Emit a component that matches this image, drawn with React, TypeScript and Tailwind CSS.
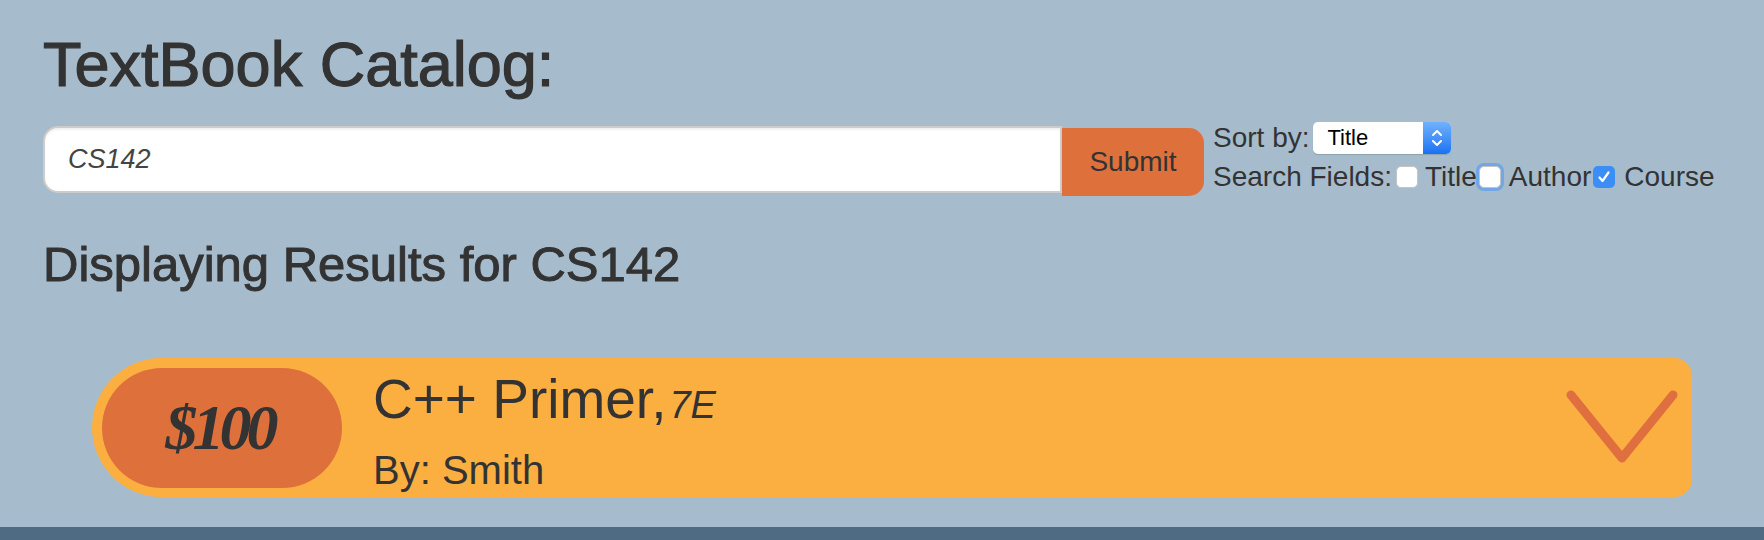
import React from 'react';

const Checkbox = ({ checked = false, focused = false }: { checked?: boolean; focused?: boolean }) => (
  <span
    className={`inline-flex items-center justify-center w-[22px] h-[22px] rounded-[5px] shrink-0 ${
      checked ? 'bg-[#3a8ef6]' : 'bg-white border border-[#c4c4c4]'
    } ${focused ? 'ring-[3px] ring-[#73a6e6]' : ''}`}
  >
    {checked && (
      <svg width="14" height="14" viewBox="0 0 14 14">
        <path d="M2.5 7.5 L5.5 11 L11.5 2.5" fill="none" stroke="white" strokeWidth="2.2" strokeLinecap="round" strokeLinejoin="round" />
      </svg>
    )}
  </span>
);

const SortSelect = () => (
  <div className="ml-[4px] flex w-[138px] h-[32px] rounded-[5px] overflow-hidden bg-white shadow-[0_1px_1px_rgba(0,0,0,0.15)]">
    <span className="flex-1 pl-[14px] text-[22px] leading-[32px] text-black">Title</span>
    <span className="w-[28px] h-full flex items-center justify-center bg-gradient-to-b from-[#6fb1fd] to-[#1772f3]">
      <svg width="14" height="22" viewBox="0 0 14 22">
        <path d="M3 8 L7 4 L11 8 M3 14 L7 18 L11 14" fill="none" stroke="white" strokeWidth="2" strokeLinecap="round" strokeLinejoin="round" />
      </svg>
    </span>
  </div>
);

export default function App() {
  return (
    <div className="min-h-[540px] w-full bg-[#a6bccc] text-[#333333] font-['Liberation_Sans',Arial,sans-serif] flex flex-col">
      <div className="pl-[43px] pt-[33px]">
        <h1 className="text-[63px] leading-[62px] [-webkit-text-stroke:1.2px_#333333]">TextBook Catalog:</h1>

        {/* search form */}
        <div className="mt-[27px] flex items-start">
          <input
            type="text"
            defaultValue="CS142"
            className="mt-[4px] h-[67px] w-[1019px] rounded-l-[15px] border-2 border-[#cccccc] bg-white pl-[23px] text-[27px] italic text-[#444444] shadow-[inset_0_2px_2px_rgba(0,0,0,0.06)] outline-none"
          />
          <button className="mt-[6px] h-[68px] w-[142px] rounded-r-[15px] bg-[#de703b] text-[28px] text-[#333333]">
            Submit
          </button>

          <div className="ml-[9px] flex flex-col text-[28px]">
            <div className="flex items-center h-[32px]">
              <span className="leading-[32px]">Sort by:</span>
              <SortSelect />
            </div>
            <div className="mt-[5px] flex items-center h-[36px] leading-[36px]">
              <span>Search Fields:</span>
              <span className="ml-[4px] mr-[3px] flex"><Checkbox /></span>
              <span className="ml-[4px]">Title</span>
              <span className="ml-[2px] mr-[3px] flex"><Checkbox focused /></span>
              <span className="ml-[5px]">Author</span>
              <span className="ml-[2px] mr-[3px] flex"><Checkbox checked /></span>
              <span className="ml-[6px]">Course</span>
            </div>
          </div>
        </div>

        <h2 className="mt-[44px] text-[49px] leading-[48px] [-webkit-text-stroke:1px_#333333]">Displaying Results for CS142</h2>
      </div>

      {/* result card */}
      <div className="mt-[70px] ml-[92px] flex w-[1600px] h-[139px] rounded-l-[70px] rounded-r-[18px] bg-[#fbaf41] p-[10px] pr-[14px]">
        <div className="w-[240px] h-[120px] shrink-0 rounded-full bg-[#de703c] flex items-center justify-center">
          <span className="font-['Liberation_Serif',serif] font-bold italic text-[64px] leading-none tracking-[-5px] text-[#333333] pr-[5px]">
            $100
          </span>
        </div>
        <div className="ml-[31px] pt-[4px] flex flex-col">
          <div className="text-[55px] leading-[55px] whitespace-nowrap">
            C++ Primer,<span className="italic text-[38px] leading-none ml-[3px]">7E</span>
          </div>
          <div className="mt-[23px] text-[40px] leading-[40px]">By: Smith</div>
        </div>
        <svg className="ml-auto mt-[22px]" width="112" height="74" viewBox="0 0 112 74">
          <path d="M5 5 L56 68 L107 5" fill="none" stroke="#df6f3f" strokeWidth="9" strokeLinecap="round" strokeLinejoin="round" />
        </svg>
      </div>

      <div className="mt-[30px] h-[13px] w-full bg-[#4f6b84]" />
    </div>
  );
}
